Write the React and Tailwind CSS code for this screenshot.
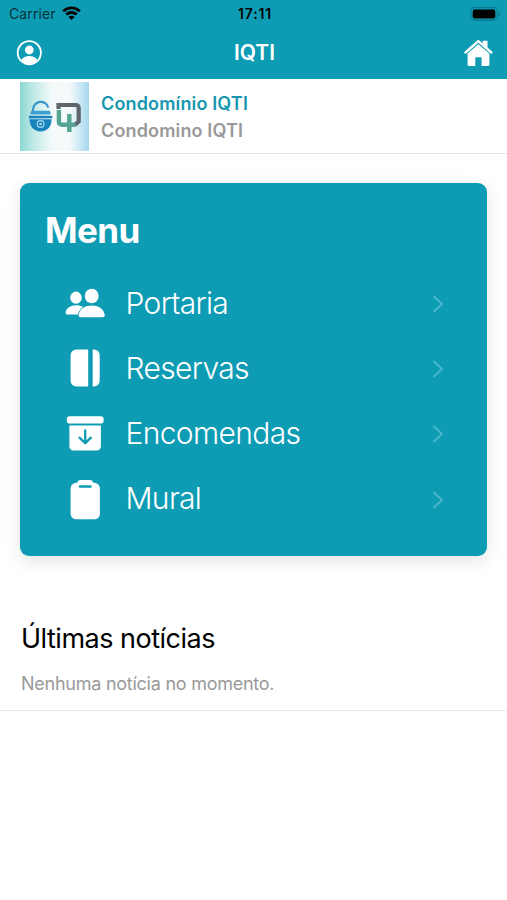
function PeopleIcon() {
  return (
    <svg className="mt-[2px] size-[42px] shrink-0" viewBox="0 0 42 42" fill="#fff">
      <ellipse cx="12" cy="14.700" rx="5.800" ry="6.100" />
      <ellipse cx="27.700" cy="13" rx="6.900" ry="7.300" />
      <path d="M12 22.200c2.800 0 5.100.6 6.900 1.700-2.500 1.700-4.200 4.100-5 7.600H3.300c-1.200 0-1.900-.8-1.700-1.900.7-4.600 4.900-7.400 10.400-7.400Z" />
      <path d="M27.700 22.600c6.600 0 11.700 3.100 13 9 .4 1.600-.4 2.700-2 2.700h-22c-1.600 0-2.400-1.100-2-2.700 1.300-5.900 6.400-9 13-9Z" />
    </svg>
  );
}

function JournalIcon() {
  return (
    <svg className="mt-px size-[42px] shrink-0" viewBox="0 0 42 42" fill="#fff">
      <path d="M12.300 2.500h11.900v37H12.300a5.700 5.700 0 0 1-5.700-5.700V8.200a5.700 5.700 0 0 1 5.700-5.700Z" />
      <path d="M28.700 2.500h1.300a5.700 5.700 0 0 1 5.700 5.700v25.600a5.700 5.700 0 0 1-5.700 5.700h-1.300Z" />
    </svg>
  );
}

function ArchiveIcon() {
  return (
    <svg className="mt-[2px] size-[42px] shrink-0" viewBox="0 0 42 42" fill="#fff">
      <rect x="2.800" y="3.300" width="36.800" height="7.300" rx="2.800" />
      <path d="M5.400 12.500h31.500v20.700a4.300 4.300 0 0 1-4.300 4.300H9.700a4.300 4.300 0 0 1-4.300-4.300Z" />
      <path d="M21.200 17.300v12.500M15.500 24.700l5.700 5.500 5.700-5.500" fill="none" stroke="#0e9cb5" strokeWidth="2.300" strokeLinecap="round" strokeLinejoin="round" />
    </svg>
  );
}

function ClipboardIcon() {
  return (
    <svg className="mt-[3px] size-[42px] shrink-0" viewBox="0 0 42 42" fill="#fff">
      <rect x="6.600" y="3.800" width="29.300" height="36.500" rx="5.600" />
      <rect x="13.300" y="1" width="15.900" height="9" rx="3.500" />
      <rect x="14.800" y="6.200" width="12.900" height="2.600" rx="1.300" fill="#0e9cb5" />
    </svg>
  );
}

const menuItems = [
  { label: "Portaria", icon: PeopleIcon },
  { label: "Reservas", icon: JournalIcon },
  { label: "Encomendas", icon: ArchiveIcon },
  { label: "Mural", icon: ClipboardIcon },
];

function WifiIcon() {
  return (
    <svg width="19" height="15" viewBox="0 0 19 15" fill="none" stroke="#000" strokeWidth="2.8">
      <path d="M1.2 5.3C5.9.7 13.1.7 17.8 5.3" />
      <path d="M4.3 8.6C7.3 5.8 11.7 5.8 14.7 8.6" />
      <path d="M9.5 14 6.4 10.9C8.2 9.3 10.8 9.3 12.6 10.9Z" fill="#000" stroke="none" />
    </svg>
  );
}

function BatteryIcon() {
  return (
    <svg width="31" height="14" viewBox="0 0 31 14">
      <rect x=".7" y=".7" width="26.6" height="12.6" rx="4" fill="none" stroke="#087a8e" strokeWidth="1.2" />
      <rect x="2.7" y="2.6" width="22.6" height="8.8" rx="2" fill="#000" />
      <path d="M28.8 4.8c2.2.8 2.2 3.6 0 4.4Z" fill="#087a8e" />
    </svg>
  );
}

function UserIcon() {
  return (
    <svg width="26" height="26" viewBox="0 0 26 26">
      <circle cx="13.3" cy="12.7" r="11.6" fill="none" stroke="#fff" strokeWidth="1.8" />
      <circle cx="13.3" cy="10" r="4.4" fill="#fff" />
      <path d="M5.2 20.4C7 17.2 9.900 16 13.300 16s6.300 1.200 8.100 4.400A11 11 0 0 1 5.200 20.400Z" fill="#fff" />
    </svg>
  );
}

function HomeIcon() {
  return (
    <svg width="29" height="28" viewBox="0 0 29 28">
      <path d="M18.600 1.800h4.900v8l-4.900-4Z" fill="#fff" />
      <path d="M3.600 14.300 14.300 5 25.400 14.300v11.300a1.500 1.500 0 0 1-1.500 1.500h-6.300v-8.800h-6.300v8.800H5.100a1.500 1.500 0 0 1-1.500-1.500Z" fill="#fff" />
      <path d="M2.600 14.700 14.300 4.600 26.200 14.700" fill="none" stroke="#0e9cb5" strokeWidth=".9" />
      <path d="M1.500 13.500 14.300 2.200 27.300 13.500" fill="none" stroke="#fff" strokeWidth="2.400" strokeLinecap="round" strokeLinejoin="round" />
    </svg>
  );
}

function Logo() {
  return (
    <div className="h-[69px] w-[69px] bg-[linear-gradient(90deg,#8bd7d1_0%,#c2eae7_20%,#f4fafa_47%,#f5f9fb_72%,#a5d8ee_100%)]">
      <svg width="69" height="69" viewBox="0 0 69 69" fill="none">
        <path d="M13 29V27.500a7.800 7.800 0 0 1 15.300-2" stroke="#3698c9" strokeWidth="2.300" />
        <path d="M10.500 32.500V30.500q0-1.800 2-1.800h16q2 0 2 1.800v2Z" fill="#3da0d0" />
        <path d="M8.800 33.800H32.300v2.500H8.800Z" fill="#1883bc" />
        <path d="M9.500 37.300h22.100c0 7.600-4.600 12.200-11 12.200s-11.100-4.600-11.100-12.200Z" fill="#1883bc" />
        <circle cx="20.600" cy="42" r="3.400" stroke="#a9d9ef" strokeWidth="1.200" />
        <circle cx="20.600" cy="42" r="1.300" fill="#a9d9ef" />
        <path d="M38.500 27V23H55.500q3.200 0 3.200 3.200v13.300l-4 3.500" stroke="#60656b" strokeWidth="4.200" />
        <path d="M38.900 28v11.500q0 3.200 3.500 3.200H55.500M49.300 32v18" stroke="#55a594" strokeWidth="4.400" />
      </svg>
    </div>
  );
}

function MenuRow({ label, icon: Icon }) {
  return (
    <li className="flex h-[65.200px] items-center pr-[43px] pl-11">
      <Icon />
      <span className="ml-[19.500px] flex-1 text-[30px] leading-9 font-[350] tracking-[-0.65px]">{label}</span>
      <svg className="mt-[3px]" width="12" height="18" viewBox="0 0 12 18" fill="none" stroke="#4bb8cb" strokeWidth="1.800">
        <path d="m1.500 1 8.500 8-8.500 8" />
      </svg>
    </li>
  );
}

export default function App() {
  return (
    <div className="h-[900px] overflow-hidden bg-white font-['Inter',sans-serif] text-black">
      <header className="h-[79px] bg-[#0e9cb5]">
        <div className="grid h-[27px] grid-cols-3 items-center pr-[6px] pl-[9px]">
          <div className="flex items-center gap-[6px]">
            <span className="text-[14px] tracking-[0.1px] text-[#06313a]">Carrier</span>
            <WifiIcon />
          </div>
          <span className="text-center text-[14px] font-semibold tracking-[0.8px]">17:11</span>
          <div className="flex justify-end">
            <BatteryIcon />
          </div>
        </div>
        <div className="grid h-[51px] grid-cols-3 items-center pr-[14px] pl-4">
          <UserIcon />
          <h1 className="pt-px text-center text-[21px] font-semibold text-white">IQTI</h1>
          <div className="flex justify-end">
            <HomeIcon />
          </div>
        </div>
      </header>

      <section className="flex h-[75px] items-start border-b border-[#e4e4e4] pt-[3px] pl-5">
        <Logo />
        <div className="ml-3 pt-[8px] text-[18px] leading-[27px] font-semibold tracking-[0.15px]">
          <p className="text-[#1697af]">Condomínio IQTI</p>
          <p className="text-[#999]">Condomino IQTI</p>
        </div>
      </section>

      <nav className="mx-5 mt-[29px] h-[373px] rounded-[9px] bg-[#0e9cb5] pt-[25px] text-white shadow-[0_5px_18px_rgba(0,0,0,0.11)]">
        <h2 className="pl-[25px] text-[35px] leading-[44px] font-bold tracking-[-0.6px]">Menu</h2>
        <ul className="mt-[18px]">
          {menuItems.map((item) => (
            <MenuRow key={item.label} {...item} />
          ))}
        </ul>
      </nav>

      <section className="mt-[65px] border-b border-[#e8e8e8] pb-[14px] pl-[21px]">
        <h3 className="text-[27px] leading-9 tracking-[-0.5px]">Últimas notícias</h3>
        <p className="mt-[15px] text-[18px] leading-6 tracking-[-0.25px] text-[#999]">Nenhuma notícia no momento.</p>
      </section>
    </div>
  );
}
